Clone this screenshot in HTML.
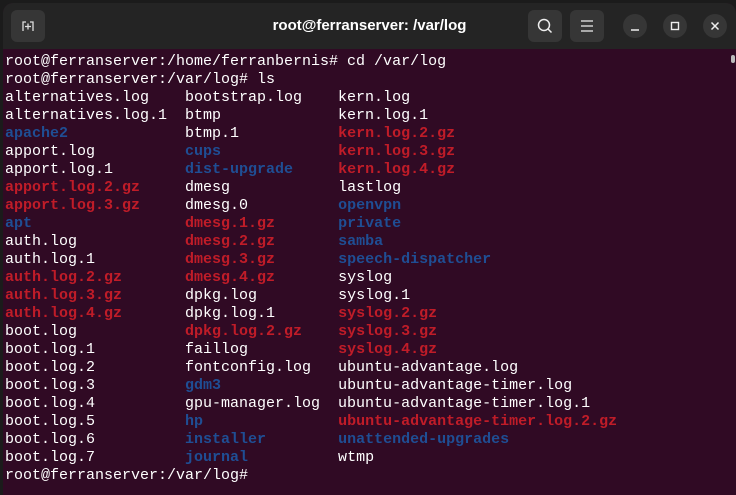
<!DOCTYPE html>
<html><head><style>
html,body{margin:0;padding:0;width:736px;height:495px;overflow:hidden;background:#1b1b1b}
.win{position:absolute;left:3px;top:3px;width:733px;height:492px;background:#300a24;border-radius:10px 10px 0 0;overflow:hidden}
.tb{position:absolute;left:0;top:0;width:733px;height:46px;background:#242424}
.title{position:absolute;left:0;width:733px;top:0;height:46px;text-align:center;color:#fff;font:bold 15px "Liberation Sans",sans-serif;line-height:46px}
.btn{position:absolute;top:7px;width:34px;height:32px;background:#363636;border-radius:6px}
.cb{position:absolute;top:11px;width:24px;height:24px;border-radius:50%;background:#363636}
pre{position:absolute;left:2px;top:50px;margin:0;font:15px "Liberation Mono",monospace;line-height:18px;color:#fff;white-space:pre}
.b{color:#1f4e94;font-weight:bold}.r{color:#c01c28;font-weight:bold}
.sb{position:absolute;right:1px;top:52px;width:4px;height:8px;background:#bbb;border-radius:2px}
</style></head><body>
<div class="win">
<div class="tb">
<div class="btn" style="left:8px"><svg width="34" height="32"><path d="M12 21V12h3M19 12h3v9M14 16.5h6M17 13.5v6" stroke="#ddd" stroke-width="1.3" fill="none"/></svg></div>
<div class="title">root@ferranserver: /var/log</div>
<div class="btn" style="left:525px"><svg width="34" height="32"><circle cx="16" cy="15" r="5.5" stroke="#eee" stroke-width="1.5" fill="none"/><path d="M20 19l3.5 3.5" stroke="#eee" stroke-width="1.5"/></svg></div>
<div class="btn" style="left:567px"><svg width="34" height="32"><path d="M11 11h12M11 16h12M11 21h12" stroke="#eee" stroke-width="1.3"/></svg></div>
<div class="cb" style="left:620px"><svg width="24" height="24"><path d="M8 16h8" stroke="#eee" stroke-width="1.5"/></svg></div>
<div class="cb" style="left:660px"><svg width="24" height="24"><rect x="8.5" y="8.5" width="7" height="7" stroke="#eee" stroke-width="1.4" fill="none"/></svg></div>
<div class="cb" style="left:700px"><svg width="24" height="24"><path d="M8.5 8.5l7 7M15.5 8.5l-7 7" stroke="#eee" stroke-width="1.5"/></svg></div>
</div>
<div class="sb"></div>
<pre>root@ferranserver:/home/ferranbernis# cd /var/log
root@ferranserver:/var/log# ls
alternatives.log    bootstrap.log    kern.log
alternatives.log.1  btmp             kern.log.1
<span class="b">apache2</span>             btmp.1           <span class="r">kern.log.2.gz</span>
apport.log          <span class="b">cups</span>             <span class="r">kern.log.3.gz</span>
apport.log.1        <span class="b">dist-upgrade</span>     <span class="r">kern.log.4.gz</span>
<span class="r">apport.log.2.gz</span>     dmesg            lastlog
<span class="r">apport.log.3.gz</span>     dmesg.0          <span class="b">openvpn</span>
<span class="b">apt</span>                 <span class="r">dmesg.1.gz</span>       <span class="b">private</span>
auth.log            <span class="r">dmesg.2.gz</span>       <span class="b">samba</span>
auth.log.1          <span class="r">dmesg.3.gz</span>       <span class="b">speech-dispatcher</span>
<span class="r">auth.log.2.gz</span>       <span class="r">dmesg.4.gz</span>       syslog
<span class="r">auth.log.3.gz</span>       dpkg.log         syslog.1
<span class="r">auth.log.4.gz</span>       dpkg.log.1       <span class="r">syslog.2.gz</span>
boot.log            <span class="r">dpkg.log.2.gz</span>    <span class="r">syslog.3.gz</span>
boot.log.1          faillog          <span class="r">syslog.4.gz</span>
boot.log.2          fontconfig.log   ubuntu-advantage.log
boot.log.3          <span class="b">gdm3</span>             ubuntu-advantage-timer.log
boot.log.4          gpu-manager.log  ubuntu-advantage-timer.log.1
boot.log.5          <span class="b">hp</span>               <span class="r">ubuntu-advantage-timer.log.2.gz</span>
boot.log.6          <span class="b">installer</span>        <span class="b">unattended-upgrades</span>
boot.log.7          <span class="b">journal</span>          wtmp
root@ferranserver:/var/log# </pre>
</div>
</body></html>
